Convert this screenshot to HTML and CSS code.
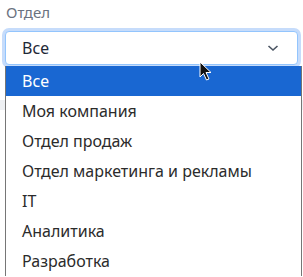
FILE: index.html
```html
<!DOCTYPE html>
<html lang="ru">
	<head>
		<meta charset="UTF-8" />
		<meta name="viewport" content="width=device-width, initial-scale=1.0" />
		<title>Отдел</title>
		<link rel="stylesheet" href="styles.css">
	</head>
	<body>
		<div class="field">
			<label class="field-label">Отдел</label>
			<div class="select-box">
				<span class="select-value">Все</span>
				<svg class="chevron" width="12" height="8" viewBox="0 0 12 8">
					<path d="M1.5 2 L6 6 L10.5 2" fill="none" stroke="#4b5563" stroke-width="1.6" />
				</svg>
			</div>
			<div class="page-strip"></div>
			<ul class="option-list">
				<li class="option active">Все</li>
				<li class="option">Моя компания</li>
				<li class="option">Отдел продаж</li>
				<li class="option">Отдел маркетинга и рекламы</li>
				<li class="option">IT</li>
				<li class="option">Аналитика</li>
				<li class="option">Разработка</li>
			</ul>
			<svg class="cursor" width="16" height="22" viewBox="0 0 16 22">
				<path d="M1 1 L1 16 L4.5 12.5 L7.5 19 L10 18 L7 11.5 L12 11.5 Z" fill="#111" stroke="#fff" stroke-width="1" />
			</svg>
		</div>
	</body>
</html>
```

FILE: styles.css
```css
/* General styling */
body {
	font-family: "Noto Sans", "Open Sans", sans-serif;
	margin: 0;
	padding: 0;
	background-color: #fff;
	color: #1f2937;
	overflow: hidden;
}

.field {
	position: relative;
	padding: 2px 3px 0 3px;
}

.field-label {
	display: block;
	font-size: 15px;
	line-height: 20px;
	color: #6b7280;
	padding-left: 3px;
	margin-bottom: 9px;
}

/* Closed select with focus ring */
.select-box {
	display: flex;
	align-items: center;
	justify-content: space-between;
	height: 32px;
	margin: 0 2px;
	padding: 0 18px 0 16px;
	border: 1px solid #93c5fd;
	border-radius: 4px;
	box-shadow: 0 0 0 3px #c6dcfb;
	background-color: #fff;
}
.select-value {
	font-size: 16px;
	color: #1f2937;
}

/* Page below the popup */
.page-strip {
	position: absolute;
	left: 0;
	top: 100px;
	width: 100%;
	height: 10px;
	background-color: #eef0f3;
}

/* Native-like popup list */
.option-list {
	position: relative;
	list-style: none;
	margin: 1px 0 0 2px;
	padding: 0;
	width: 295px;
	border-left: 1px solid #767676;
	border-right: 1px solid #767676;
	background-color: #fff;
}
.option {
	height: 30px;
	line-height: 31px;
	padding-left: 16px;
	font-size: 16px;
	color: #2b2b2b;
}
.option.active {
	background-color: #1967d2;
	color: #fff;
}

.cursor {
	position: absolute;
	left: 199px;
	top: 61px;
}
```
